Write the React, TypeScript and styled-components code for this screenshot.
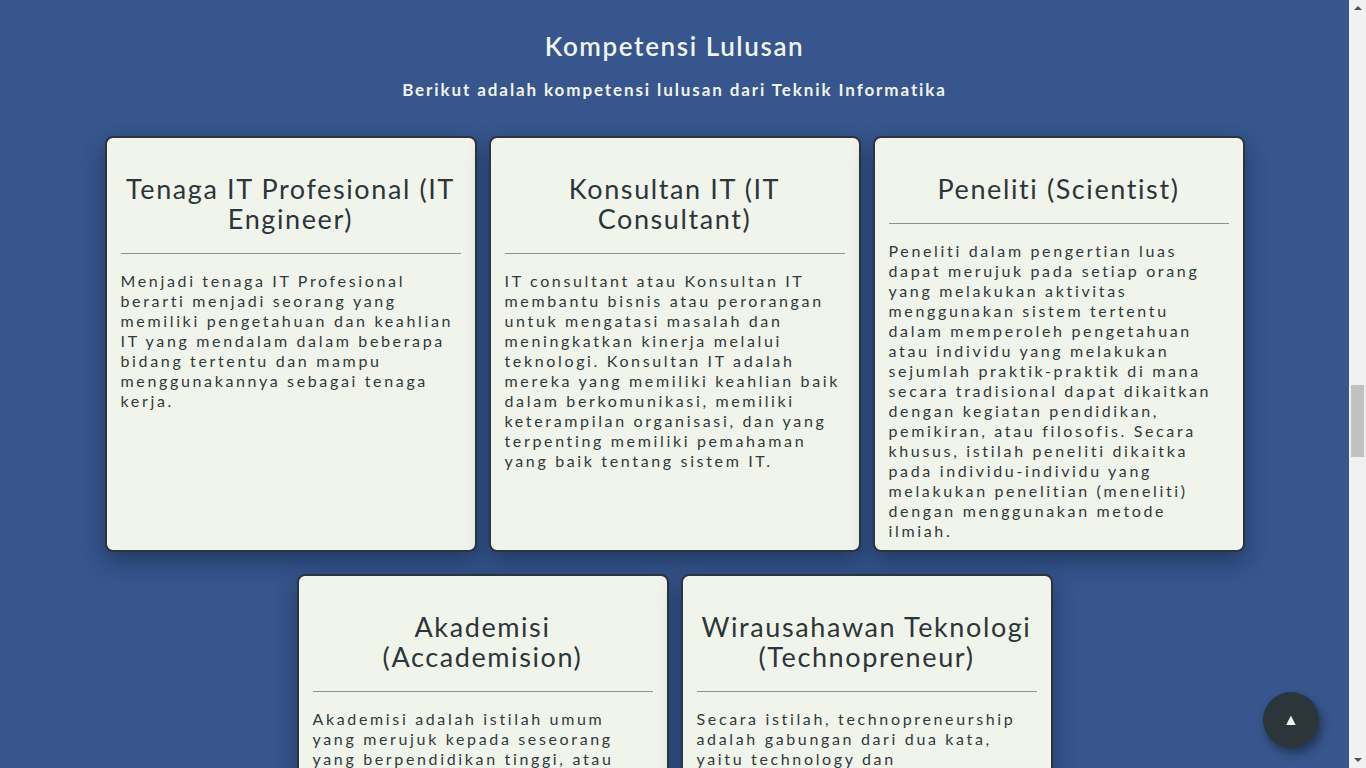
import React from "react";
import styled, { createGlobalStyle } from "styled-components";

const GlobalStyle = createGlobalStyle`
    html, body {
        margin: 0;
        padding: 0;
        background: #36568d;
    }
    body {
        font-family: "Lato", "Noto Sans", sans-serif;
    }
    * {
        box-sizing: border-box;
    }
`;

const Page = styled.div`
    margin-right: 17px;
`;

const Section = styled.section`
    padding: 31px 0 60px;
    color: #f1f4ec;
`;

const Heading = styled.h2`
    margin: 0;
    text-align: center;
    font-size: 26px;
    line-height: 30px;
    font-weight: 600;
    letter-spacing: 1.6px;
`;

const Subheading = styled.p`
    margin: 19px 0 0;
    text-align: center;
    font-size: 17px;
    line-height: 20px;
    font-weight: 700;
    letter-spacing: 1.9px;
`;

const CardGrid = styled.div`
    display: flex;
    flex-wrap: wrap;
    justify-content: center;
    gap: 22px 12px;
    margin-top: 36px;
`;

const Card = styled.div`
    display: flex;
    flex-direction: column;
    width: 372px;
    height: 416px;
    background: #f1f4eb;
    border: 2px solid #2c3539;
    border-radius: 8px;
    padding: 36px 14px 14px;
    box-shadow: 0 10px 22px rgba(10, 25, 55, 0.45);
    color: #2c3539;
`;

const CardTitle = styled.h3`
    margin: 0;
    text-align: center;
    font-size: 27px;
    line-height: 30px;
    font-weight: 400;
    letter-spacing: 1.6px;
`;

const Divider = styled.hr`
    margin: 19px 0 0;
    border: none;
    border-top: 1px solid #8c9094;
`;

const CardText = styled.p`
    margin: 17px 0 0;
    font-size: 16px;
    line-height: 20px;
    letter-spacing: 2.65px;
    color: #2f3a3b;
`;

const TopButton = styled.button`
    position: fixed;
    right: 47px;
    bottom: 20px;
    width: 56px;
    height: 56px;
    border-radius: 50%;
    border: none;
    background: #2c3539;
    color: #f1f4ec;
    font-size: 16px;
    box-shadow: 3px 5px 10px rgba(0, 0, 0, 0.4);
    cursor: pointer;
`;

/* stands in for the browser scrollbar seen in the screenshot */
const ScrollTrack = styled.div`
    position: fixed;
    top: 0;
    right: 0;
    width: 17px;
    height: 100vh;
    display: flex;
    flex-direction: column;
    align-items: center;
    padding: 6px 0;
    background: #f1f1f1;
`;

const ScrollRail = styled.div`
    flex: 1;
    width: 13px;
    padding: 6px 0;
`;

const ScrollThumb = styled.div`
    width: 13px;
    height: 72px;
    background: #c1c1c1;
`;

const ScrollArrow = styled.div<{ $down?: boolean }>`
    width: 0;
    height: 0;
    border-left: 4px solid transparent;
    border-right: 4px solid transparent;
    ${({ $down }) =>
        $down
            ? "border-top: 4px solid #505050;"
            : "border-bottom: 4px solid #505050;"}
`;

type Competence = {
    title: string;
    text: string;
};

const competences: Competence[] = [
    {
        title: "Tenaga IT Profesional (IT Engineer)",
        text: "Menjadi tenaga IT Profesional berarti menjadi seorang yang memiliki pengetahuan dan keahlian IT yang mendalam dalam beberapa bidang tertentu dan mampu menggunakannya sebagai tenaga kerja.",
    },
    {
        title: "Konsultan IT (IT Consultant)",
        text: "IT consultant atau Konsultan IT membantu bisnis atau perorangan untuk mengatasi masalah dan meningkatkan kinerja melalui teknologi. Konsultan IT adalah mereka yang memiliki keahlian baik dalam berkomunikasi, memiliki keterampilan organisasi, dan yang terpenting memiliki pemahaman yang baik tentang sistem IT.",
    },
    {
        title: "Peneliti (Scientist)",
        text: "Peneliti dalam pengertian luas dapat merujuk pada setiap orang yang melakukan aktivitas menggunakan sistem tertentu dalam memperoleh pengetahuan atau individu yang melakukan sejumlah praktik-praktik di mana secara tradisional dapat dikaitkan dengan kegiatan pendidikan, pemikiran, atau filosofis. Secara khusus, istilah peneliti dikaitka pada individu-individu yang melakukan penelitian (meneliti) dengan menggunakan metode ilmiah.",
    },
    {
        title: "Akademisi (Accademision)",
        text: "Akademisi adalah istilah umum yang merujuk kepada seseorang yang berpendidikan tinggi, atau seseorang yang bekerja sebagai pengajar maupun peneliti di lingkungan perguruan tinggi.",
    },
    {
        title: "Wirausahawan Teknologi (Technopreneur)",
        text: "Secara istilah, technopreneurship adalah gabungan dari dua kata, yaitu technology dan entrepreneurship, yaitu wirausaha yang memanfaatkan teknologi untuk menciptakan produk dan layanan baru.",
    },
];

// how far the page is scrolled, 0..1, as in the screenshot
const scrollRatio = 0.557;

const App = () => {
    const railLength = 768 - 12 - 10 - 12 - 72;

    return (
        <>
            <GlobalStyle />
            <Page>
                <Section>
                    <Heading>Kompetensi Lulusan</Heading>
                    <Subheading>
                        Berikut adalah kompetensi lulusan dari Teknik Informatika
                    </Subheading>
                    <CardGrid>
                        {competences.map(({ title, text }) => (
                            <Card key={title}>
                                <CardTitle>{title}</CardTitle>
                                <Divider />
                                <CardText>{text}</CardText>
                            </Card>
                        ))}
                    </CardGrid>
                </Section>
            </Page>
            <TopButton aria-label="Kembali ke atas">▲</TopButton>
            <ScrollTrack>
                <ScrollArrow />
                <ScrollRail>
                    <ScrollThumb
                        style={{ marginTop: Math.round(scrollRatio * railLength) }}
                    />
                </ScrollRail>
                <ScrollArrow $down />
            </ScrollTrack>
        </>
    );
};

export default App;
